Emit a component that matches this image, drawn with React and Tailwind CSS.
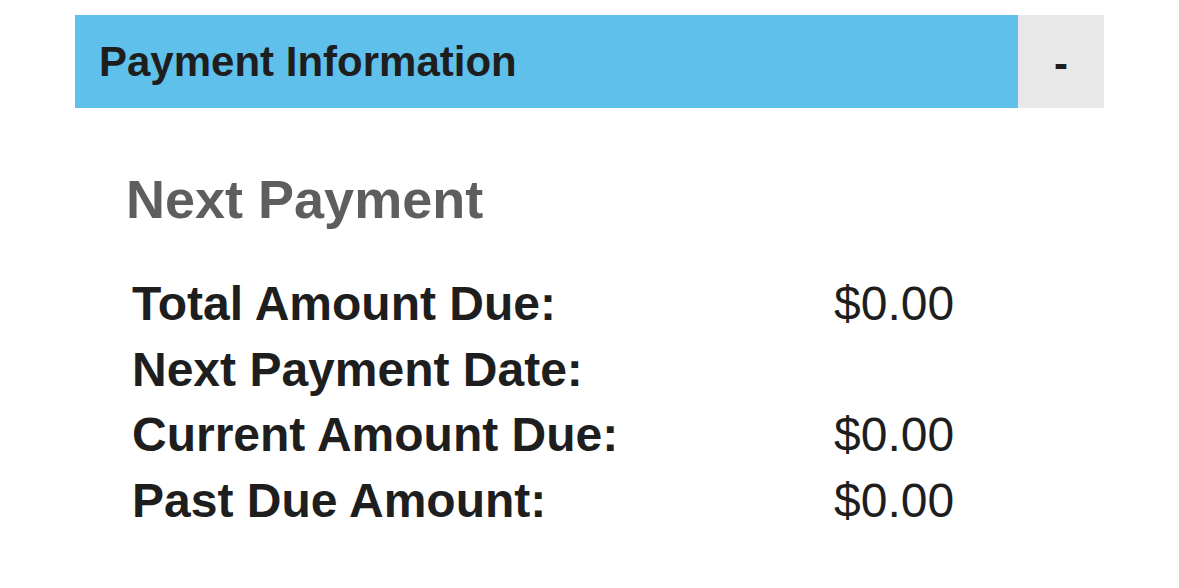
export default function App() {
  const rows = [
    ["Total Amount Due:", "$0.00"],
    ["Next Payment Date:", ""],
    ["Current Amount Due:", "$0.00"],
    ["Past Due Amount:", "$0.00"],
  ];
  return (
    <div
      className="min-h-[588px] bg-white pt-[15px] pl-[75px]"
      style={{ fontFamily: '"Liberation Sans", Arial, sans-serif' }}
    >
      <div className="w-[1029px]">
        <div className="flex h-[93px]">
          <div className="flex flex-1 items-center bg-[#5fc0eb] pl-[24px]">
            <span className="text-[42px] font-bold leading-none text-[#1e1e1e]">
              Payment Information
            </span>
          </div>
          <div className="flex w-[86px] items-center justify-center bg-[#e8e8e8] pt-[4px]">
            <span className="text-[42px] font-bold leading-none text-[#1e1e1e]">-</span>
          </div>
        </div>
        <div className="pl-[51px] pt-[64px]">
          <h2 className="text-[54px] font-bold leading-none text-[#5e5e5e]">Next Payment</h2>
        </div>
        <div className="grid grid-cols-[702px_auto] pl-[57px] pt-[45px] text-[48px] leading-[65.5px] text-[#1e1e1e]">
          {rows.map(([label, value]) => (
            <div key={label} className="contents">
              <div className="font-bold">{label}</div>
              <div>{value}</div>
            </div>
          ))}
        </div>
      </div>
    </div>
  );
}
